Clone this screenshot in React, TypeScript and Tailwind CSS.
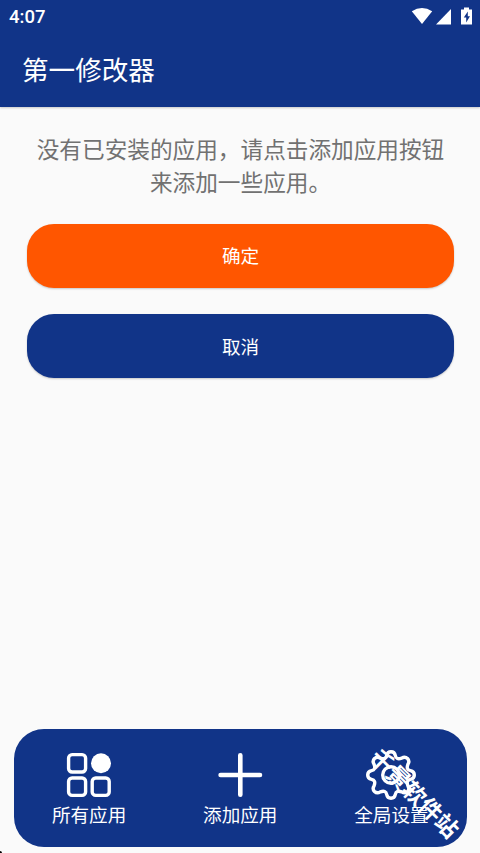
import React from 'react';

const GridIcon = () => (
  <svg width="46" height="46" viewBox="0 0 46 46" fill="none" stroke="white" strokeWidth="3.4">
    <rect x="2.6" y="2.6" width="17" height="17.4" rx="3.5" />
    <rect x="2.6" y="26" width="17" height="17.4" rx="3.5" />
    <rect x="26.2" y="26" width="17" height="17.4" rx="3.5" />
    <circle cx="35" cy="11.2" r="10" fill="white" stroke="none" />
  </svg>
);

const PlusIcon = () => (
  <svg width="46" height="46" viewBox="0 0 46 46" stroke="white" strokeWidth="4.6" strokeLinecap="round">
    <path d="M23.3 3.3V42.7M3.6 23H43" />
  </svg>
);

// eight rounded teeth around a hub
const GearIcon = () => (
  <svg width="52" height="52" viewBox="-26 -26 52 52" className="-my-[3px]" fill="none" stroke="white" strokeWidth="3.4" strokeLinejoin="round">
    <path d="M-4.3 -19.5 Q-3.6 -23.3 0 -23.3 Q3.6 -23.3 4.3 -19.5 Q5.2 -14.8 10.7 -16.9 Q13.9 -19 16.5 -16.5 Q19 -13.9 16.9 -10.7 Q14.8 -5.2 19.5 -4.3 Q23.3 -3.6 23.3 0 Q23.3 3.6 19.5 4.3 Q14.8 5.2 16.9 10.7 Q19 13.9 16.5 16.5 Q13.9 19 10.7 16.9 Q5.2 14.8 4.3 19.5 Q3.6 23.3 0 23.3 Q-3.6 23.3 -4.3 19.5 Q-5.2 14.8 -10.7 16.9 Q-13.9 19 -16.5 16.5 Q-19 13.9 -16.9 10.7 Q-14.8 5.2 -19.5 4.3 Q-23.3 3.6 -23.3 0 Q-23.3 -3.6 -19.5 -4.3 Q-14.8 -5.2 -16.9 -10.7 Q-19 -13.9 -16.5 -16.5 Q-13.9 -19 -10.7 -16.9 Q-5.2 -14.8 -4.3 -19.5Z" />
    <circle r="8.3" />
  </svg>
);

const tabs = [
  { label: '所有应用', Icon: GridIcon },
  { label: '添加应用', Icon: PlusIcon },
  { label: '全局设置', Icon: GearIcon },
];

const App: React.FC = () => {
  return (
    <div className="relative flex h-[853px] w-[480px] flex-col overflow-hidden bg-[#fafafa] font-['Noto_Sans_CJK_SC',sans-serif]">
      <header className="h-[107px] shrink-0 bg-[#113488] text-white shadow-[0_1px_2px_rgba(0,0,0,0.2)]">
        {/* Status bar */}
        <div className="flex h-8 items-center justify-between pt-[2px] pr-[8px] pl-[9px]">
          <span className="pt-[2px] font-[Roboto,sans-serif] text-[18.5px] font-medium">4:07</span>
          <svg width="62" height="20" viewBox="410 7 62 20" fill="white">
            <path d="M411.8 11.2Q422 4.6 432.2 11.2L422 24Z" />
            <path d="M451 9V24.5H436Z" />
            <path d="M464 7.5h5v2h3v15h-11v-15h3Z" />
            <path d="M467.8 11.5L463.8 17.4h2.4v5l3.8-6.2h-2.2Z" fill="#113488" />
          </svg>
        </div>
        <h1 className="mt-[17px] ml-[22px] text-[26.6px] leading-[40px]">第一修改器</h1>
      </header>

      <main className="flex flex-1 flex-col pt-[25px] pr-[26px] pl-[27px]">
        <p className="text-center text-[22.65px] leading-[33px] text-[#717171]">
          没有已安装的应用，请点击添加应用按钮
          <br />
          来添加一些应用。
        </p>
        <button className="mt-[26px] h-[64px] rounded-[27px] bg-[#ff5600] pb-[2px] text-[18.6px] text-white shadow-[0_1px_2px_rgba(0,0,0,0.2)]">
          确定
        </button>
        <button className="mt-[26.4px] h-[64px] rounded-[27px] bg-[#113488] pb-px text-[18.6px] text-white shadow-[0_1px_2px_rgba(0,0,0,0.2)]">
          取消
        </button>
      </main>

      {/* Bottom navigation */}
      <nav className="mr-[13px] mb-[6px] ml-[13.5px] flex h-[118px] shrink-0 rounded-[30px] bg-[#113488] text-white">
        {tabs.map(({ label, Icon }) => (
          <button key={label} className="flex flex-1 flex-col items-center pt-[23px]">
            <Icon />
            <span className="mt-[2px] text-[18.6px] leading-[28px]">{label}</span>
          </button>
        ))}
      </nav>

      <div className="pointer-events-none absolute top-[778px] left-[355px] w-[120px] rotate-45 text-center text-[22.8px] leading-[30px] font-bold whitespace-nowrap text-white">
        千景软件站
      </div>
      <div className="absolute bottom-0 left-0 h-[2px] w-[2px] rounded-tr-full bg-black" />
    </div>
  );
};

export default App;
